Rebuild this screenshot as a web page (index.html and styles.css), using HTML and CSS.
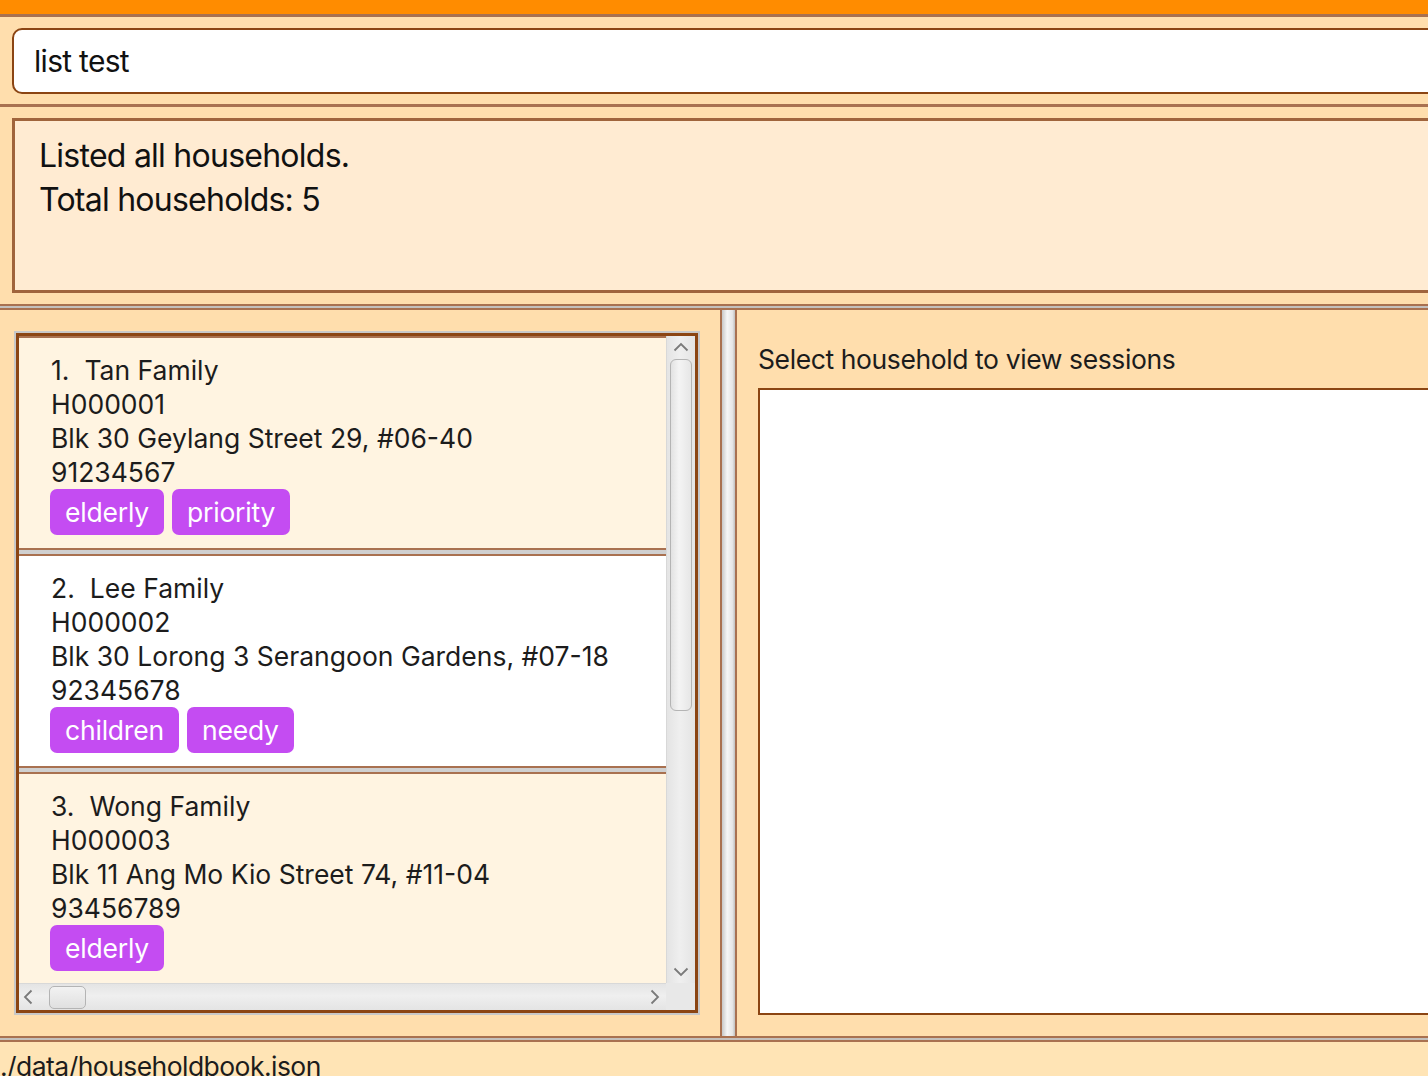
FILE: index.html
```html
<!DOCTYPE html>
<html lang="en">
<head>
<meta charset="utf-8">
<title>HouseholdBook</title>
<link rel="stylesheet" href="styles.css">
</head>
<body>
<div class="app">
  <div class="menubar"></div>
  <div class="cmd-pane">
    <div class="cmd-box">list test</div>
  </div>
  <div class="result-pane">
    <div class="result-box">
      <div>Listed all households.</div>
      <div>Total households: 5</div>
    </div>
  </div>
  <div class="sep"></div>
  <div class="main">
    <div class="left-panel">
      <div class="list-box">
        <div class="list-view">
          <div class="cards">
            <div class="card odd">
              <div class="line"><span class="num">1.</span>Tan Family</div>
              <div class="line">H000001</div>
              <div class="line">Blk 30 Geylang Street 29, #06-40</div>
              <div class="line">91234567</div>
              <div class="tags"><span class="tag">elderly</span><span class="tag">priority</span></div>
            </div>
            <div class="card even">
              <div class="line"><span class="num">2.</span>Lee Family</div>
              <div class="line">H000002</div>
              <div class="line">Blk 30 Lorong 3 Serangoon Gardens, #07-18</div>
              <div class="line">92345678</div>
              <div class="tags"><span class="tag">children</span><span class="tag">needy</span></div>
            </div>
            <div class="card odd">
              <div class="line"><span class="num">3.</span>Wong Family</div>
              <div class="line">H000003</div>
              <div class="line">Blk 11 Ang Mo Kio Street 74, #11-04</div>
              <div class="line">93456789</div>
              <div class="tags"><span class="tag">elderly</span></div>
            </div>
          </div>
          <div class="vscroll">
            <svg class="arrow" width="16" height="10" viewBox="0 0 16 10"><path d="M1.5 8.5 L8 2 L14.5 8.5" fill="none" stroke="#7a7a7a" stroke-width="1.8"/></svg>
            <div class="vtrack"><div class="vthumb"></div></div>
            <svg class="arrow" width="16" height="10" viewBox="0 0 16 10"><path d="M1.5 1.5 L8 8 L14.5 1.5" fill="none" stroke="#7a7a7a" stroke-width="1.8"/></svg>
          </div>
          <div class="hscroll">
            <svg class="harrow" width="10" height="16" viewBox="0 0 10 16"><path d="M8.5 1.5 L2 8 L8.5 14.5" fill="none" stroke="#7a7a7a" stroke-width="1.8"/></svg>
            <div class="htrack"><div class="hthumb"></div></div>
            <svg class="harrow" width="10" height="16" viewBox="0 0 10 16"><path d="M1.5 1.5 L8 8 L1.5 14.5" fill="none" stroke="#7a7a7a" stroke-width="1.8"/></svg>
          </div>
          <div class="corner"></div>
        </div>
      </div>
    </div>
    <div class="splitter"></div>
    <div class="right-panel">
      <div class="sess-label">Select household to view sessions</div>
      <div class="sess-box"></div>
    </div>
  </div>
  <div class="sep"></div>
  <div class="footer">./data/householdbook.json</div>
</div>
</body>
</html>
```
FILE: styles.css
```css
* { box-sizing: border-box; }
html, body { margin: 0; padding: 0; }
body {
  width: 1428px;
  height: 1076px;
  overflow: hidden;
  font-family: Inter, "Noto Sans", "Liberation Sans", sans-serif;
  color: #1c1c1c;
  background: #FFDEAD;
}
.app {
  display: flex;
  flex-direction: column;
  height: 1076px;
}
.menubar {
  height: 17px;
  flex: none;
  background: #FF8C00;
  border-bottom: 3px solid #A97150;
}
.cmd-pane {
  flex: none;
  height: 90px;
  padding: 11px 0 0 12px;
  background: #FFDEAD;
  border-bottom: 3px solid #A97150;
}
.cmd-box {
  width: 1440px;
  height: 66px;
  background: #fff;
  border: 2px solid #8B4513;
  border-radius: 10px;
  padding-left: 20px;
  font-size: 30px;
  letter-spacing: -0.7px;
  line-height: 63px;
  color: #111;
}
.result-pane {
  flex: none;
  height: 197px;
  padding: 11px 0 0 12px;
  background: #FFDEAD;
}
.result-box {
  width: 1440px;
  height: 175px;
  background: #FFEBD2;
  border: 3px solid #A0643C;
  padding: 13px 0 0 24px;
  font-size: 32px;
  letter-spacing: -0.75px;
  line-height: 44px;
  color: #111;
}
.sep {
  flex: none;
  height: 6px;
  background: #C4C0BC;
  border-top: 2px solid #A97150;
  border-bottom: 2px solid #A97150;
}
.main {
  flex: none;
  height: 726px;
  display: flex;
}
.left-panel {
  width: 722px;
  flex: none;
  background: #FFDEAD;
  border-right: 2px solid #A97150;
  padding: 21px 0 0 14px;
}
.list-box {
  width: 686px;
  height: 684px;
  border: 2px solid #C8C8C8;
}
.list-view {
  width: 682px;
  height: 680px;
  border: 3px solid #8B4513;
  display: grid;
  grid-template-columns: 1fr 29px;
  grid-template-rows: 1fr 27px;
  background: #D0D0D0;
  overflow: hidden;
}
.cards {
  overflow: hidden;
  display: flex;
  flex-direction: column;
  gap: 4px;
}
.card {
  flex: none;
  height: 214px;
  border-top: 2px solid #A97150;
  border-bottom: 2px solid #A97150;
  padding: 15px 0 0 32px;
  font-size: 26.5px;
  letter-spacing: 0;
  line-height: 34px;
  color: #1c1c1c;
}
.card.odd { background: #FFF4E1; }
.card.even { background: #FFFFFF; }
.num { margin-right: 15px; }
.tags {
  display: flex;
  gap: 8px;
  height: 46px;
  margin-left: -1px;
}
.tag {
  background: #C44CF2;
  color: #fff;
  border-radius: 7px;
  padding: 0 15px;
  height: 46px;
  line-height: 46px;
  font-size: 26.5px;
  letter-spacing: -0.2px;
}
.vscroll {
  background: linear-gradient(to right, #E4E4E4, #EFEFEF 45%, #E4E4E4);
  border-left: 1px solid #D8D8D8;
  display: flex;
  flex-direction: column;
  align-items: center;
  padding: 4px 0 4px;
}
.arrow { flex: none; margin: 2px 0; }
.vtrack {
  flex: 1;
  width: 100%;
  padding: 5px 3px 0 3px;
}
.vthumb {
  height: 352px;
  border: 1px solid #B4B4B4;
  border-radius: 6px;
  background: linear-gradient(to right, #E2E2E2, #F4F4F4 40%, #E6E6E6);
}
.hscroll {
  background: linear-gradient(to bottom, #E4E4E4, #EFEFEF 45%, #E4E4E4);
  border-top: 1px solid #D8D8D8;
  display: flex;
  align-items: center;
  padding: 0 6px 0 4px;
}
.harrow { flex: none; }
.htrack {
  flex: 1;
  padding: 0 0 0 16px;
}
.hthumb {
  width: 37px;
  height: 23px;
  border: 1px solid #B4B4B4;
  border-radius: 5px;
  background: linear-gradient(to bottom, #F2F2F2, #E0E0E0);
}
.corner { background: #E8E8E8; }
.splitter {
  width: 15px;
  flex: none;
  background: linear-gradient(to right, #C8C8C8, #F6F6F6 40%, #E6E6E6 80%, #C0C0C0);
  border-right: 2px solid #A97150;
}
.right-panel {
  flex: 1;
  background: #FFDEAD;
  padding: 34px 0 21px 21px;
  display: flex;
  flex-direction: column;
}
.sess-label {
  font-size: 26.5px;
  letter-spacing: -0.4px;
  line-height: 30px;
  height: 30px;
  margin-bottom: 14px;
  color: #1c1c1c;
}
.sess-box {
  flex: 1;
  background: #fff;
  border: 2px solid #8B4513;
  border-right: none;
}
.footer {
  flex: 1;
  background: #FFE4B5;
  font-size: 26.5px;
  letter-spacing: -0.55px;
  line-height: 34px;
  padding-top: 7px;
  color: #1c1c1c;
  white-space: nowrap;
}
```
